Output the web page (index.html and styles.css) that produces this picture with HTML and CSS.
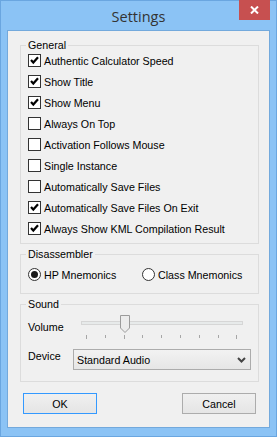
FILE: index.html
```html
<!DOCTYPE html>
<html lang="en">
<head>
    <meta charset="UTF-8">
    <title>Settings</title>
    <link rel="stylesheet" href="styles.css">
</head>
<body>
    <div class="window">
        <div class="titlebar">
            <div class="title">Settings</div>
            <div class="close">
                <svg width="9" height="8" viewBox="0 0 9 8"><path d="M1 0.5 L8 7.5 M8 0.5 L1 7.5" stroke="#fff" stroke-width="2"/></svg>
            </div>
        </div>
        <div class="client">
            <div class="group general">
                <div class="legend">General</div>
                <div class="check"><span class="box on"></span>Authentic Calculator Speed</div>
                <div class="check"><span class="box on"></span>Show Title</div>
                <div class="check"><span class="box on"></span>Show Menu</div>
                <div class="check"><span class="box"></span>Always On Top</div>
                <div class="check"><span class="box"></span>Activation Follows Mouse</div>
                <div class="check"><span class="box"></span>Single Instance</div>
                <div class="check"><span class="box"></span>Automatically Save Files</div>
                <div class="check"><span class="box on"></span>Automatically Save Files On Exit</div>
                <div class="check"><span class="box on"></span>Always Show KML Compilation Result</div>
            </div>

            <div class="group disasm">
                <div class="legend">Disassembler</div>
                <div class="radios">
                    <div class="radio first"><span class="dot on"></span>HP Mnemonics</div>
                    <div class="radio"><span class="dot"></span>Class Mnemonics</div>
                </div>
            </div>

            <div class="group sound">
                <div class="legend">Sound</div>
                <div class="volume-row">
                    <span class="label vol">Volume</span>
                    <svg class="slider" width="165" height="28" viewBox="0 0 165 28">
                        <rect x="0.5" y="8.5" width="161" height="3" fill="#e7eaea" stroke="#d6d6d6"/>
                        <g stroke="#a6a6a6">
                            <path d="M5.5 22 V26 M24.5 22 V25 M43.5 22 V26 M61.5 22 V25 M80.5 22 V25 M99.5 22 V25 M118.5 22 V25 M137.5 22 V25 M155.5 22 V26"/>
                        </g>
                        <path d="M39.5 2.5 H48.5 V15 L44 19.5 L39.5 15 Z" fill="#ececec" stroke="#9b9b9b"/>
                    </svg>
                </div>
                <div class="device-row">
                    <span class="label dev">Device</span>
                    <div class="select">
                        <span>Standard Audio</span>
                        <svg width="9" height="6" viewBox="0 0 9 6"><path d="M1 1 L4.5 4.5 L8 1" fill="none" stroke="#444" stroke-width="2"/></svg>
                    </div>
                </div>
            </div>

            <div class="buttons">
                <button class="btn default">OK</button>
                <button class="btn">Cancel</button>
            </div>
        </div>
    </div>
</body>
</html>
```

FILE: styles.css
```css
body {
    margin: 0;
    font-family: "Liberation Sans", Arial, sans-serif;
    font-size: 10.7px;
    color: #000;
}
.window {
    width: 277px;
    height: 437px;
    box-sizing: border-box;
    background-color: #8bc3f5;
    border: 1px solid #6aa6e0;
    padding: 0 6px 0 6px;
}
.titlebar {
    display: grid;
    grid-template-columns: 1fr auto 1fr;
    height: 29px;
    margin: 0 -6px;
}
.title {
    grid-column: 2;
    font-family: "Open Sans", "Noto Sans", sans-serif;
    font-size: 14.5px;
    color: #333;
    line-height: 29px;
    padding-top: 1px;
}
.close {
    grid-column: 3;
    justify-self: end;
    width: 31px;
    height: 20px;
    margin-top: -1px;
    margin-right: 6px;
    background-color: #c75050;
    display: flex;
    align-items: center;
    justify-content: center;
}
.client {
    height: 398px;
    box-sizing: border-box;
    background-color: #f0f0f0;
    border: 1px solid #73a9dc;
    padding-top: 14px;
}
.group {
    width: 239px;
    box-sizing: border-box;
    margin-left: 12px;
    border: 1px solid #dcdcdc;
    padding: 0 7px;
}
.legend {
    width: fit-content;
    height: 13px;
    line-height: 13px;
    margin-top: -7px;
    margin-left: -2px;
    padding: 0 2px;
    background-color: #f0f0f0;
}
.general .legend { margin-bottom: -2px; }
.general { padding-bottom: 4px; }
.check {
    height: 21px;
    display: flex;
    align-items: center;
}
.box {
    width: 13px;
    height: 13px;
    box-sizing: border-box;
    border: 1px solid #333;
    background-color: #fff;
    margin-right: 3px;
    flex: none;
}
.box.on {
    background: #fff url("data:image/svg+xml,%3Csvg xmlns='http://www.w3.org/2000/svg' width='11' height='11'%3E%3Cpath d='M2 5 L4.3 7.5 L9 2.2' fill='none' stroke='%23000' stroke-width='2.2'/%3E%3C/svg%3E") no-repeat center;
}

.disasm { margin-top: 10px; padding-bottom: 5px; }
.radios {
    display: flex;
    height: 27px;
    align-items: center;
}
.radio {
    display: flex;
    align-items: center;
}
.radio.first { width: 114px; }
.dot {
    width: 13px;
    height: 13px;
    box-sizing: border-box;
    border: 1px solid #333;
    border-radius: 50%;
    background-color: #fff;
    margin-right: 3px;
    display: flex;
    align-items: center;
    justify-content: center;
}
.dot.on::after {
    content: "";
    width: 7px;
    height: 7px;
    border-radius: 50%;
    background-color: #1a1a1a;
}

.sound { margin-top: 10px; padding-bottom: 11px; }
.volume-row, .device-row {
    display: flex;
    align-items: flex-start;
}
.volume-row { height: 34px; }
.label {
    line-height: 13px;
    flex: none;
}
.vol { width: 53px; margin-top: 10px; }
.slider { margin-top: 2px; }
.device-row { margin-top: 4px; }
.dev { width: 45px; margin-top: 1px; }
.select {
    width: 178px;
    height: 21px;
    box-sizing: border-box;
    border: 1px solid #acacac;
    background: linear-gradient(#f2f2f2, #e6e6e6);
    display: flex;
    align-items: center;
    justify-content: space-between;
    padding: 0 4px 0 3px;
}

.buttons {
    display: flex;
    justify-content: space-between;
    padding: 11px 13px 0 15px;
}
.btn {
    width: 74px;
    height: 21px;
    font-family: "Liberation Sans", Arial, sans-serif;
    font-size: 10.7px;
    color: #000;
    border: 1px solid #acacac;
    background: linear-gradient(#f0f0f0, #e5e5e5);
    padding: 0;
}
.btn.default { border-color: #3399ff; }
```
